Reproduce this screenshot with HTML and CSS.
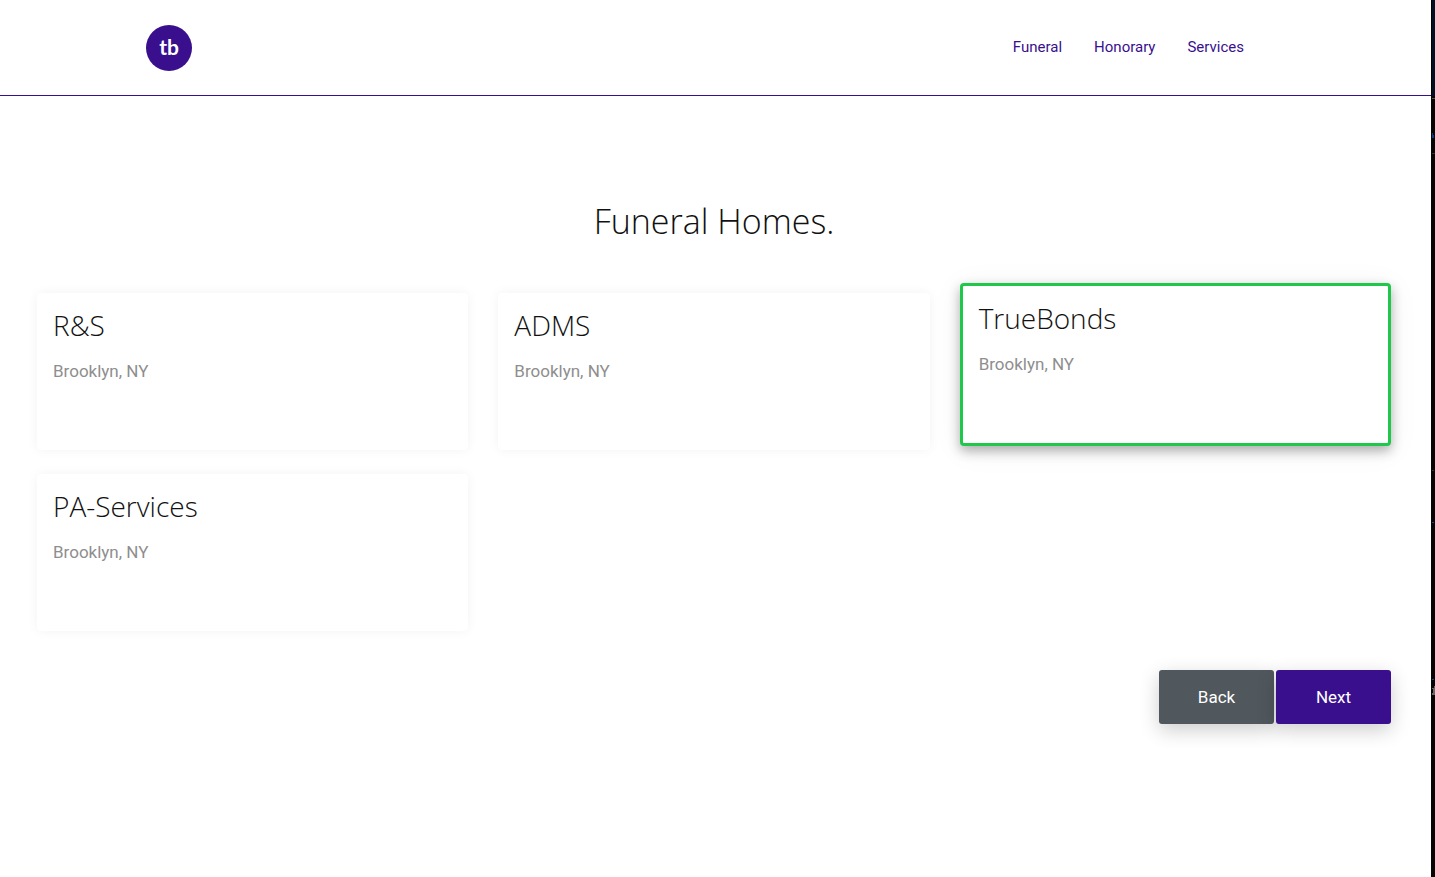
FILE: index.html
```html
<!DOCTYPE html>
<html lang="en">
<head>
<meta charset="utf-8">
<title>Funeral Homes</title>
<link rel="stylesheet" href="styles.css">
</head>
<body>
<div class="page">
  <header class="site-header">
    <div class="header-inner">
      <a class="logo" href="#" aria-label="Home">tb</a>
      <nav class="nav">
        <a href="#">Funeral</a>
        <a href="#">Honorary</a>
        <a href="#">Services</a>
      </nav>
    </div>
  </header>
  <main class="content">
    <h1>Funeral Homes.</h1>
    <div class="cards">
      <article class="card"><h2>R&amp;S</h2><p>Brooklyn, NY</p></article>
      <article class="card"><h2>ADMS</h2><p>Brooklyn, NY</p></article>
      <article class="card selected"><h2>TrueBonds</h2><p>Brooklyn, NY</p></article>
      <article class="card"><h2>PA-Services</h2><p>Brooklyn, NY</p></article>
    </div>
    <div class="actions">
      <button class="btn back" type="button">Back</button>
      <button class="btn next" type="button">Next</button>
    </div>
  </main>
</div>
<div class="edge">
  <span class="edge-top"></span>
  <svg class="edge-marks" width="4" height="781" viewBox="0 0 4 781" aria-hidden="true">
    <path d="M1 2.500H4" stroke="#555"/>
    <path d="M1 37H2V42H1ZM2 39H3V42H2Z" fill="#0b3a78"/>
    <path d="M1 57.500H4M1 374.500H3" stroke="#333"/>
    <path d="M1 426.500H3M1 583.500H3" stroke="#0b4aa0"/>
    <path d="M1 592H3V590H4V599H1V597H2V593H1Z" fill="#666"/>
  </svg>
</div>
</body>
</html>
```

FILE: styles.css
```css
* { box-sizing: border-box; }
body {
  margin: 0;
  min-height: 100vh;
  display: flex;
  font-family: Roboto, "Noto Sans", sans-serif;
  font-size: 17px;
  background: #fff;
}
.page { flex: 1; min-width: 0; }
.site-header { border-bottom: 1px solid #390f8e; }
.header-inner {
  max-width: 1139px;
  margin: 0 auto;
  padding: 25px 41px 24px 0;
  display: flex;
  align-items: center;
  justify-content: space-between;
}
.logo {
  width: 46px;
  height: 46px;
  border-radius: 50%;
  background: #390f8e;
  color: #fff;
  font: 700 21px/44px Lato, sans-serif;
  text-align: center;
  text-decoration: none;
}
.nav { display: flex; gap: 32px; padding-bottom: 2px; }
.nav a { color: #390f8e; font-size: 15px; line-height: 20px; text-decoration: none; }
.content { padding: 101px 40px 40px 37px; }
h1, h2 {
  margin: 0;
  color: #111;
  font-family: "Open Sans", "Noto Sans", sans-serif;
  font-weight: 300;
}
h1 { font-size: 34px; line-height: 48px; text-align: center; margin-bottom: 48px; }
.cards {
  display: grid;
  grid-template-columns: repeat(3, 1fr);
  gap: 18px 30px;
  align-items: start;
}
.card {
  min-height: 157px;
  padding: 16px;
  border-radius: 4px;
  background: #fff;
  box-shadow: 0 0 12px rgba(0, 0, 0, 0.05);
}
.card h2 { font-size: 28px; line-height: 32px; }
.card p { margin: 18px 0 0; color: #8e8e8e; line-height: 24px; }
.card.selected {
  min-height: 163px;
  border: 3px solid #1fc84b;
  transform: translateY(-10px);
  box-shadow: 0 5px 12px rgba(0, 0, 0, 0.3), 0 4px 32px rgba(0, 0, 0, 0.06);
}
.actions { display: flex; justify-content: flex-end; gap: 2px; margin-top: 39px; }
.btn {
  width: 115px;
  height: 54px;
  border: 0;
  border-radius: 3px;
  color: #fff;
  font: inherit;
  box-shadow: 0 6px 20px rgba(0, 0, 0, 0.2);
}
.back { background: #50575d; }
.next { background: #390f8e; }
.edge { width: 4px; background: #050506; }
.edge-top { display: block; height: 96px; background: #031024; border-left: 1px solid #000; }
.edge-marks { display: block; }
```
